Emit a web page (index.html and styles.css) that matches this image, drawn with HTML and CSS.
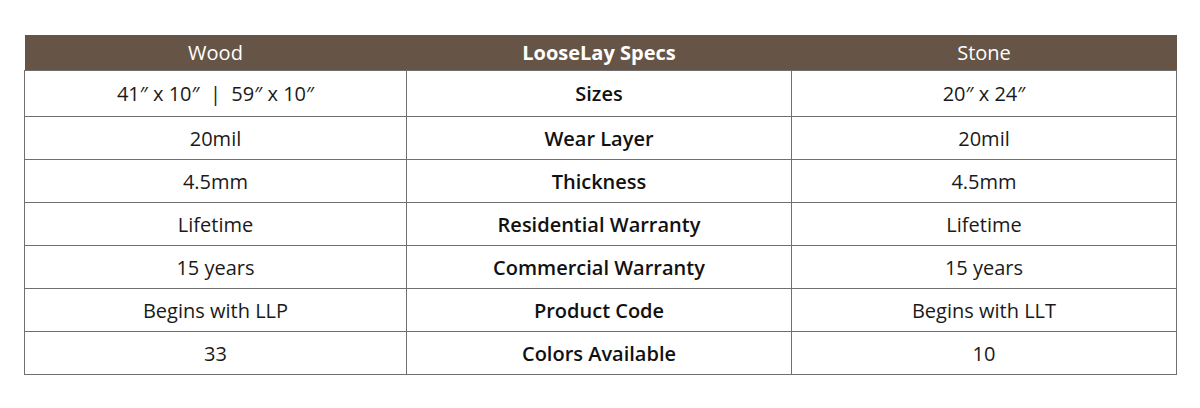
FILE: index.html
```
<!DOCTYPE html>
<html>
<head>
<meta charset="utf-8">
<link rel="stylesheet" href="styles.css">
</head>
<body>
<div class="wrap">
<table class="specs">
<colgroup><col class="c1"><col class="c2"><col class="c3"></colgroup>
<thead>
<tr><th>Wood</th><th class="mid">LooseLay Specs</th><th>Stone</th></tr>
</thead>
<tbody>
<tr class="first"><td>41″ x 10″ &nbsp;|&nbsp; 59″ x 10″</td><td class="mid">Sizes</td><td>20″ x 24″</td></tr>
<tr><td>20mil</td><td class="mid">Wear Layer</td><td>20mil</td></tr>
<tr><td>4.5mm</td><td class="mid">Thickness</td><td>4.5mm</td></tr>
<tr><td>Lifetime</td><td class="mid">Residential Warranty</td><td>Lifetime</td></tr>
<tr><td>15 years</td><td class="mid">Commercial Warranty</td><td>15 years</td></tr>
<tr><td>Begins with LLP</td><td class="mid">Product Code</td><td>Begins with LLT</td></tr>
<tr><td>33</td><td class="mid">Colors Available</td><td>10</td></tr>
</tbody>
</table>
</div>
</body>
</html>
```
FILE: styles.css
```
html, body { margin: 0; padding: 0; background: #fff; }
.wrap { padding: 35px 24px 0 24px; }
.specs {
  width: 1152px;
  border-collapse: collapse;
  table-layout: fixed;
  font-family: "Open Sans", "Liberation Sans", sans-serif;
  font-size: 20px;
  color: #1a1a1a;
}
.specs .c1 { width: 382px; }
.specs .c2 { width: 385px; }
.specs .c3 { width: 385px; }
.specs th {
  background: #665547;
  color: #fff;
  font-weight: 400;
  height: 35px;
  padding: 0;
  border: none;
  text-align: center;
}
.specs th.mid { font-weight: 700; }
.specs td {
  border: 1.5px solid #6f6f6f;
  height: 42px;
  padding: 0;
  text-align: center;
  vertical-align: middle;
}
.specs tr.first td { height: 45px; }
.specs td.mid { font-weight: 600; color: #111; }
```
